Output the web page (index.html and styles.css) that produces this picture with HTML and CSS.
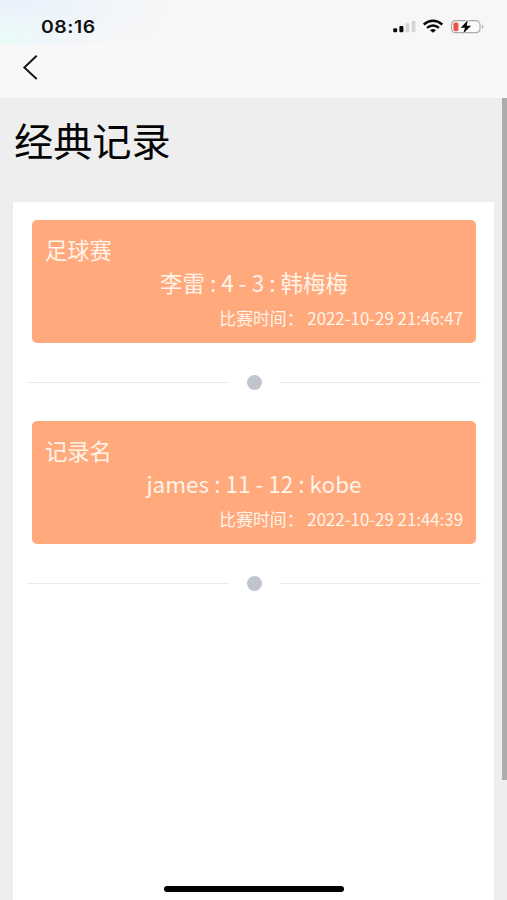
FILE: index.html
```html
<!DOCTYPE html>
<html lang="zh-CN">
<head>
<meta charset="utf-8">
<title>经典记录</title>
<link rel="stylesheet" href="styles.css">
</head>
<body>
<div class="screen">
  <header class="header">
    <div class="status">
      <span class="clock">08:16</span>
      <svg class="indicators" width="92" height="16" viewBox="0 0 92 16">
        <rect x="1.2" y="9.3" width="4" height="4" rx="1.2" fill="#080808"/>
        <rect x="7.4" y="7" width="4" height="6.3" rx="1" fill="#080808"/>
        <rect x="13.6" y="4.3" width="3.6" height="9" rx="1" fill="#d4d4d4"/>
        <rect x="19.8" y="1.8" width="3.6" height="11.5" rx="1" fill="#d4d4d4"/>
        <g fill="none" stroke="#080808" stroke-width="2.3">
          <path d="M31.7 5.5Q41 -2 50.3 5.5"/>
          <path d="M35 8.9Q41 4 47 8.9"/>
        </g>
        <path d="M38 11.2Q41 8.9 44 11.2L41 13.7Z" fill="#080808"/>
        <rect x="59.5" y="1.7" width="28.5" height="12" rx="4" fill="#fafafa" stroke="#aaa" stroke-width="1.2"/>
        <rect x="61.4" y="3.4" width="5" height="8.8" rx="1.8" fill="#ee5148"/>
        <path d="M90 5.7Q93 7.7 90 9.7Z" fill="#aaa"/>
        <path d="M75.8 1.2L68.7 8.8H73L71.2 14.500L79.200 6.700H74.700Z" fill="#080808" stroke="#fafafa" stroke-width="1.2" paint-order="stroke"/>
      </svg>
    </div>
    <div class="nav">
      <svg width="18" height="28" viewBox="0 0 18 28"><path d="M14.7 2.8L2.3 14.5L14.7 26" fill="none" stroke="#111" stroke-width="1.9"/></svg>
    </div>
  </header>
  <main class="content">
    <h1 class="title">经典记录</h1>
    <section class="panel">
      <article class="card">
        <div class="name">足球赛</div>
        <div class="score">李雷 : 4 - 3 : 韩梅梅</div>
        <div class="time">比赛时间： 2022-10-29 21:46:47</div>
      </article>
      <div class="divider"><i class="line"></i><i class="dot"></i><i class="line"></i></div>
      <article class="card">
        <div class="name">记录名</div>
        <div class="score">james : 11 - 12 : kobe</div>
        <div class="time">比赛时间： 2022-10-29 21:44:39</div>
      </article>
      <div class="divider"><i class="line"></i><i class="dot"></i><i class="line"></i></div>
    </section>
  </main>
  <div class="scrollbar"></div>
  <div class="home"></div>
</div>
</body>
</html>
```
FILE: styles.css
```css
* { box-sizing: border-box; }
body { margin: 0; font-family: "Noto Sans CJK SC", sans-serif; }
.screen {
  position: relative;
  display: flex;
  flex-direction: column;
  height: 900px;
  overflow: hidden;
  background: #eee;
}
.header { flex: none; height: 98px; background: #f8f8f8; }
.status {
  display: flex;
  justify-content: space-between;
  height: 44px;
  padding: 16px 23px 0 41px;
  background:
    radial-gradient(ellipse 75px 38px at 0 44px, #e9fbf9, transparent),
    radial-gradient(ellipse 150px 65px at 15px 0, #e8f2fc, transparent),
    #f7f7f8;
}
.clock {
  font: 600 17px/22px Inter, sans-serif;
  letter-spacing: .5px;
  color: #111;
  transform: scaleX(1.14);
  transform-origin: left;
}
.indicators { margin-top: 3px; }
.nav { padding: 9px 0 0 22px; }
.nav svg { display: block; }
.content { flex: 1; display: flex; flex-direction: column; padding: 0 13px; }
.title {
  height: 104px;
  margin: 0;
  padding: 12px 0 0 1px;
  font-size: 39.2px;
  font-weight: 400;
  line-height: 58px;
  color: #050505;
}
.panel { flex: 1; padding: 18px 13px 0 14px; background: #fff; }
.card {
  height: 123px;
  margin: 0 5px;
  padding: 12px 13px 0;
  border-radius: 5px;
  background: #ffa97d;
  color: #fff4e8;
}
.name { font-size: 22.3px; line-height: 34px; }
.score { font-size: 22.5px; line-height: 33px; text-align: center; }
.time { padding-top: 2px; font-size: 16.85px; line-height: 34px; text-align: right; white-space: nowrap; }
.divider { display: flex; align-items: center; height: 78px; }
.line { flex: 1; height: 1px; background: #e8eaed; }
.dot { width: 15px; height: 15px; margin: 0 18px; border-radius: 50%; background: #c0c4cc; }
.scrollbar {
  position: absolute;
  top: 98px;
  right: 0;
  width: 5px;
  height: 682px;
  background: #acacac;
}
.home {
  position: absolute;
  left: 164px;
  bottom: 8px;
  width: 180px;
  height: 6px;
  border-radius: 3px;
  background: #000;
}
```
